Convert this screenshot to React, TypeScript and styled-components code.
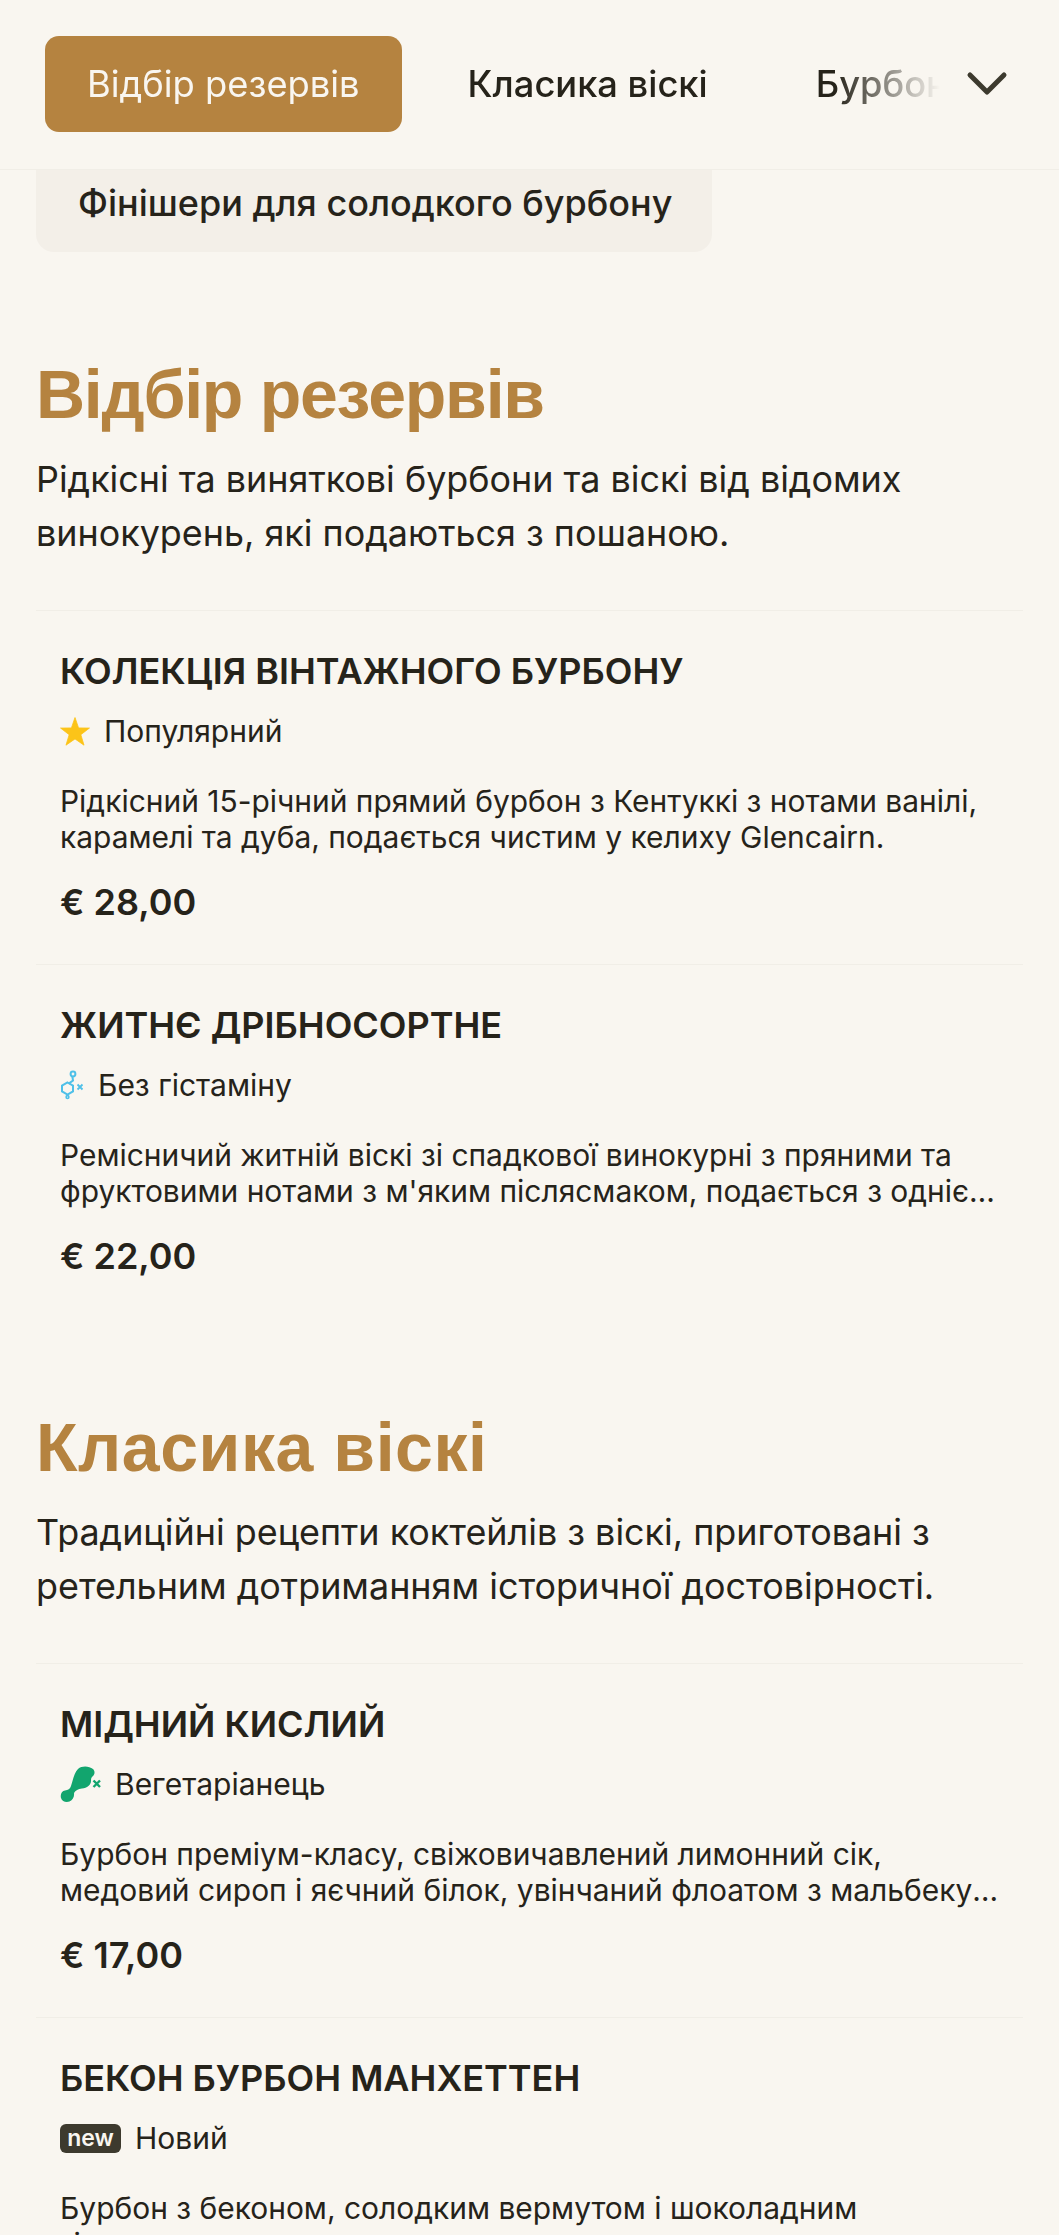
import React from "react";
import styled, { createGlobalStyle } from "styled-components";

const Global = createGlobalStyle`
  html, body { margin: 0; padding: 0; background: #f9f6f0; }
  body { height: 2235px; overflow: hidden; font-family: Inter, "Noto Sans", sans-serif; color: #26231a; }
  * { box-sizing: border-box; }
`;

const Page = styled.div`
  width: 1059px;
  height: 2235px;
  overflow: hidden;
`;

const Header = styled.header`
  position: relative;
  height: 170px;
  border-bottom: 1px solid #f1eee7;
  display: flex;
  align-items: flex-start;
  padding: 36px 0 0 45px;
`;

const Tabs = styled.nav`
  display: flex;
  gap: 24px;
  width: 895px;
  overflow: hidden;
  mask-image: linear-gradient(to right, #000 790px, transparent 895px);
`;

const Tab = styled.div<{ $active?: boolean }>`
  flex: none;
  height: 96px;
  padding: 0 42px;
  display: flex;
  align-items: center;
  border-radius: 14px;
  font-size: 36.3px;
  white-space: nowrap;
  font-weight: ${(p) => (p.$active ? 400 : 500)};
  background: ${(p) => (p.$active ? "#b58340" : "transparent")};
  color: ${(p) => (p.$active ? "#f9f6f0" : "#26231a")};
`;

const Chevron = styled.svg`
  position: absolute;
  left: 964px;
  top: 64px;
  width: 48px;
  height: 40px;
`;

const Chip = styled.div`
  margin-left: 36px;
  width: 676px;
  height: 82px;
  border-radius: 0 0 18px 18px;
  background: #f3efe8;
  padding: 0 42px 16px;
  display: flex;
  align-items: center;
  font-size: 36px;
  font-weight: 500;
  white-space: nowrap;
`;

const Section = styled.section<{ $first?: boolean }>`
  padding: 0 36px;
  margin-top: ${(p) => (p.$first ? "104px" : "91px")};
`;

const SectionTitle = styled.h2<{ $spacing: number }>`
  margin: 0;
  font-family: "Liberation Sans", Arial, sans-serif;
  font-size: 68px;
  line-height: 76px;
  font-weight: 700;
  letter-spacing: ${(p) => p.$spacing}px;
  color: #b58340;
`;

const SectionText = styled.p`
  margin: 20px 0 0;
  font-size: 35.9px;
  line-height: 54px;
`;

const List = styled.div`
  margin-top: 50px;
`;

const Item = styled.article`
  border-top: 1px solid #f1eee7;
  padding: 36px 24px 0;
  height: 354px;
`;

const ItemTitle = styled.h3`
  margin: 0;
  font-size: 36px;
  line-height: 48px;
  font-weight: 600;
  text-transform: uppercase;
`;

const Tag = styled.div`
  margin-top: 14px;
  height: 44px;
  display: flex;
  align-items: center;
  gap: 14px;
  font-size: 30px;
`;

const NewBadge = styled.span`
  width: 61px;
  height: 29px;
  border-radius: 6px;
  background: #3d3a2e;
  color: #f9f6f0;
  font-size: 23px;
  font-weight: 600;
  display: flex;
  align-items: center;
  justify-content: center;
`;

const Desc = styled.p`
  margin: 30px 0 0;
  font-size: 29.95px;
  line-height: 36px;
  display: -webkit-box;
  -webkit-box-orient: vertical;
  -webkit-line-clamp: 2;
  overflow: hidden;
`;

const Price = styled.div`
  margin-top: 23px;
  font-size: 36px;
  line-height: 48px;
  font-weight: 600;
`;

const Star = () => (
  <svg width="30" height="29" viewBox="0.7 0.7 22.6 21.6">
    <path
      fill="#fcc419"
      stroke="#fcc419"
      strokeWidth="0.6"
      strokeLinejoin="round"
      d="M12 1l2.7 7.8 8.2.1-6.5 5 2.4 7.9L12 17.1l-6.8 4.7 2.4-7.9-6.5-5 8.2-.1z"
    />
  </svg>
);
const Molecule = () => (
  <svg width="24" height="30" viewBox="0 0 24 30" fill="none" stroke="#4fc0e8" strokeWidth="2">
    <circle cx="13" cy="4" r="2.4" />
    <path d="M12.4 6.6l.6 4-4.4 3" />
    <path d="M7.5 12.5l5.5 3.2v5.6l-5.5 3.2L2 21.3v-5.6z" />
    <circle cx="7.5" cy="27" r="1.4" strokeWidth="1.6" />
    <path d="M17.5 14.5l5 5M22.5 14.5l-5 5" strokeWidth="1.8" />
  </svg>
);
const Leg = () => (
  <svg width="41" height="37" viewBox="0 0 41 37">
    <path
      fill="#12a56e"
      d="M11 20C13 14 14 7 18 3 22-.5 29 0 33 3c2 2 2 5 0 7-2 1.500-2 3-2 5 0 4-4 7-9 7.500-4 .5-6.500 2-8 4.500.5 3-1 7-4.500 8.500C6 36.800 2 35.500 1 32 0 28 2 25 5 24.500 8 24 10 23 11 20z"
    />
    <path d="M33.500 14.500l6.500 6.500M40 14.500l-6.500 6.500" stroke="#12a56e" strokeWidth="2.400" />
  </svg>
);

const data = [
  {
    title: "Відбір резервів",
    spacing: -1.25,
    text: ["Рідкісні та виняткові бурбони та віскі від відомих", "винокурень, які подаються з пошаною."],
    items: [
      { name: "Колекція вінтажного бурбону", icon: <Star />, tag: "Популярний", desc: "Рідкісний 15-річний прямий бурбон з Кентуккі з нотами ванілі, карамелі та дуба, подається чистим у келиху Glencairn.", price: "€ 28,00" },
      { name: "Житнє дрібносортне", icon: <Molecule />, tag: "Без гістаміну", desc: "Ремісничий житній віскі зі спадкової винокурні з пряними та фруктовими нотами з м'яким післясмаком, подається з однією великою кулькою льоду.", price: "€ 22,00" },
    ],
  },
  {
    title: "Класика віскі",
    spacing: 0.55,
    text: ["Традиційні рецепти коктейлів з віскі, приготовані з", "ретельним дотриманням історичної достовірності."],
    items: [
      { name: "Мідний кислий", icon: <Leg />, tag: "Вегетаріанець", desc: "Бурбон преміум-класу, свіжовичавлений лимонний сік, медовий сироп і яєчний білок, увінчаний флоатом з мальбеку та ароматними гіркими.", price: "€ 17,00" },
      { name: "Бекон Бурбон Манхеттен", icon: <NewBadge>new</NewBadge>, tag: "Новий", desc: "Бурбон з беконом, солодким вермутом і шоколадним гіркуватим сиропом, подається з вишнею.", price: "€ 19,00" },
    ],
  },
];

export default function App() {
  return (
    <Page>
      <Global />
      <Header>
        <Tabs>
          <Tab $active>Відбір резервів</Tab>
          <Tab>Класика віскі</Tab>
          <Tab>Бурбонові коктейлі</Tab>
        </Tabs>
        <Chevron viewBox="0 0 48 40" fill="none" stroke="#3d3a2e" strokeWidth="5" strokeLinecap="round" strokeLinejoin="round">
          <path d="M6 11l17 17L40 11" />
        </Chevron>
      </Header>
      <Chip>Фінішери для солодкого бурбону</Chip>
      {data.map((s, i) => (
        <Section key={s.title} $first={i === 0}>
          <SectionTitle $spacing={s.spacing}>{s.title}</SectionTitle>
          <SectionText>{s.text[0]}<br />{s.text[1]}</SectionText>
          <List>
            {s.items.map((it) => (
              <Item key={it.name}>
                <ItemTitle>{it.name}</ItemTitle>
                <Tag>{it.icon}{it.tag}</Tag>
                <Desc>{it.desc}</Desc>
                <Price>{it.price}</Price>
              </Item>
            ))}
          </List>
        </Section>
      ))}
    </Page>
  );
}
